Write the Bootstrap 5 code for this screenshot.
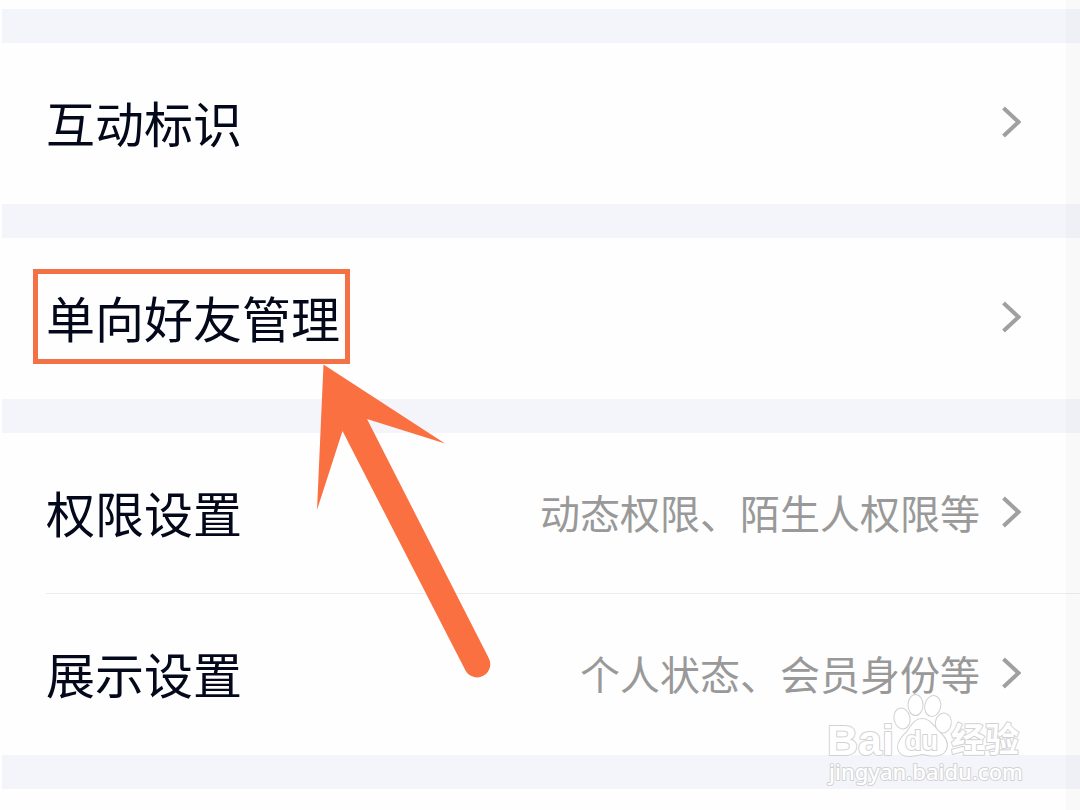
<!DOCTYPE html>
<html lang="zh-CN">
<head>
<meta charset="utf-8">
<meta name="viewport" content="width=device-width, initial-scale=1">
<title>设置</title>
<link href="https://cdn.jsdelivr.net/npm/bootstrap@5.3.0/dist/css/bootstrap.min.css" rel="stylesheet">
<style>
  body { font-family: "Noto Sans CJK SC", sans-serif; background: #fefefe; color: #03081a; }
  .settings-page { padding-top: 9px; padding-left: 2px; min-height: 100vh; overflow: hidden; }
  .edge-shade { top: 0; right: 0; bottom: 0; width: 14px; background: rgba(90, 80, 100, .03); }
  .settings-group { border-top: 34px solid #f4f5fa; }
  .settings-row { height: 161px; padding: 0 59px 4px 44px; color: inherit; font-size: 49px; line-height: 72px; }
  .settings-row > * { position: relative; }
  .settings-group li + li .settings-row::before { content: ""; position: absolute; top: -1px; left: 44px; right: 0; height: 1px; background: #ebedf0; }
  .row-hint { color: #999; font-size: 40px; line-height: 60px; }
  .chevron { width: 20px; height: 32px; margin-left: 21px; }
  .callout-box { top: -12px; left: -13px; right: -10px; height: 95px; border: 5px solid #f47145; }
  .callout-arrow { left: 315px; top: 363px; width: 180px; height: 316px; }
  .watermark { right: 52px; top: 692px; width: 204px; height: 98px; }
  .wm-text { font-family: "Liberation Sans", "Noto Sans CJK SC", sans-serif; font-weight: 700; }
</style>
</head>
<body>
<main class="settings-page position-relative">
  <ul class="settings-group list-unstyled m-0">
    <li class="position-relative">
      <a href="#" class="settings-row d-flex align-items-center text-decoration-none"><span class="me-auto">互动标识</span>
        <svg class="chevron" viewBox="0 0 20 32" aria-hidden="true"><path d="M2.5 2L17.500 16L2.500 30" fill="none" stroke="#a0a0a0" stroke-width="4"/></svg></a>
    </li>
  </ul>
  <ul class="settings-group list-unstyled m-0">
    <li class="position-relative">
      <a href="#" class="settings-row d-flex align-items-center text-decoration-none"><span class="me-auto">单向好友管理<i class="callout-box position-absolute"></i></span>
        <svg class="chevron" viewBox="0 0 20 32" aria-hidden="true"><path d="M2.5 2L17.500 16L2.500 30" fill="none" stroke="#a0a0a0" stroke-width="4"/></svg></a>
    </li>
  </ul>
  <ul class="settings-group list-unstyled m-0">
    <li class="position-relative">
      <a href="#" class="settings-row d-flex align-items-center text-decoration-none"><span class="me-auto">权限设置</span><span class="row-hint">动态权限、陌生人权限等</span>
        <svg class="chevron" viewBox="0 0 20 32" aria-hidden="true"><path d="M2.5 2L17.500 16L2.500 30" fill="none" stroke="#a0a0a0" stroke-width="4"/></svg></a>
    </li>
    <li class="position-relative">
      <a href="#" class="settings-row d-flex align-items-center text-decoration-none"><span class="me-auto">展示设置</span><span class="row-hint">个人状态、会员身份等</span>
        <svg class="chevron" viewBox="0 0 20 32" aria-hidden="true"><path d="M2.5 2L17.500 16L2.500 30" fill="none" stroke="#a0a0a0" stroke-width="4"/></svg></a>
    </li>
  </ul>
  <div class="settings-group"></div>
  <div class="edge-shade position-absolute"></div>
  <svg class="callout-arrow position-absolute" viewBox="315 363 180 316" aria-hidden="true">
    <path d="M323.500 364.500L445 443.500L367 419L488.700 658A13 13 0 0 1 465.500 670.500L342.500 431L317 510Z" fill="#fa7040"/>
  </svg>
  <svg class="watermark position-absolute" viewBox="824 692 204 98" role="img" aria-label="Baidu 经验">
    <g fill="#fff" stroke="#d2d2d4" stroke-width="2" stroke-linejoin="round" paint-order="stroke">
      <g class="wm-text">
        <text x="827" y="755" font-size="43">Bai</text>
        <text x="951" y="752" font-size="34">经验</text>
      </g>
      <ellipse cx="902" cy="718.500" rx="7.500" ry="10" transform="rotate(-12 902 718.500)"/>
      <ellipse cx="915.500" cy="705" rx="7" ry="10"/>
      <ellipse cx="932.700" cy="706" rx="7.500" ry="10" transform="rotate(12 932.700 706)"/>
      <ellipse cx="943.300" cy="723" rx="7.500" ry="9.500" transform="rotate(10 943.300 723)"/>
      <path d="M922 719C930 719 934 727 939 732C946 738 949 745 945 751C941 757 932 756 922 754C912 756 903 758 899 751C896 744 901 738 907 732C911 727 914 719 922 719Z"/>
      <text class="wm-text" x="905" y="750" font-size="27">du</text>
      <text x="829" y="780" font-size="22" font-family="Noto Sans" font-weight="500">jingyan.baidu.com</text>
    </g>
  </svg>
</main>
<script src="https://cdn.jsdelivr.net/npm/bootstrap@5.3.0/dist/js/bootstrap.bundle.min.js"></script>
</body>
</html>
